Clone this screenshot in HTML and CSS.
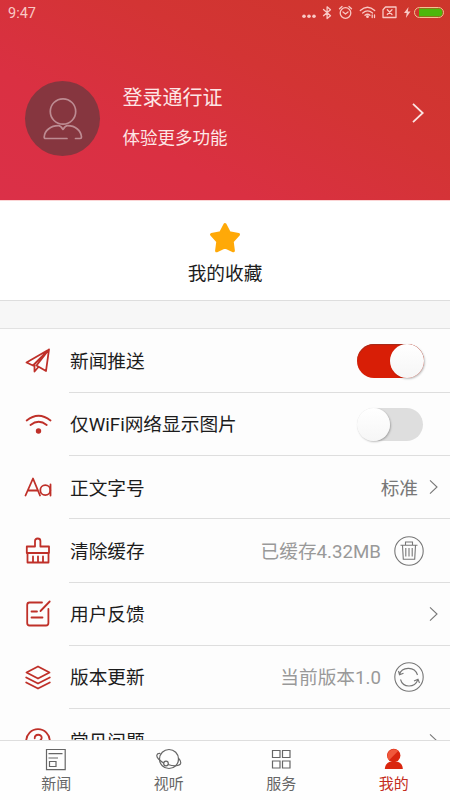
FILE: index.html
```html
<!DOCTYPE html>
<html lang="zh-CN">
<head>
<meta charset="utf-8">
<title>我的</title>
<link rel="stylesheet" href="styles.css">
</head>
<body>
<div class="app">
  <header class="hero">
    <div class="status">
      <span class="time">9:47</span>
      <svg class="status-icons" width="144" height="20" viewBox="301 3 144 20">
        <g fill="#f9c9c5"><circle cx="304" cy="16.3" r="1.8"/><circle cx="309" cy="16.3" r="1.8"/><circle cx="314" cy="16.3" r="1.8"/></g>
        <g fill="none" stroke="#f9c9c5" stroke-width="1.3" stroke-linecap="round" stroke-linejoin="round">
          <path d="M323.5 9.500l7 6.200-3.400 2.800V6.800l3.400 2.900-7 6"/>
          <circle cx="345.500" cy="13" r="5.300"/><path d="M343 12l2.500 2 2.500-2M339.500 8.800l2.500-2.300M351.500 8.800l-2.500-2.300"/>
          <path d="M360.300 10.500q7.200-6.600 14.400 0M362.700 13q4.900-4.200 9.800 0M365 15.300q2.600-2.100 5 0M372.200 15v2.500M374.500 15v2.500"/>
          <path d="M385.500 7h10.500v10.500h-13V9.800zM387.300 9.800l4.700 4.700M392 9.800l-4.700 4.700"/>
        </g>
        <circle cx="367.500" cy="16.700" r="1.400" fill="#f9c9c5"/>
        <path d="M408.500 7l-4.500 6h2.700l-.8 5 4.600-6.400h-2.700z" fill="#f9c9c5"/>
        <rect x="414.500" y="7.500" width="29" height="10" rx="5" fill="none" stroke="#f0c391"/>
        <path d="M419 8.500h20q3.500 0 3.500 4t-3.500 4h-20z" fill="#4db70b"/>
      </svg>
    </div>
    <div class="profile">
      <div class="avatar">
        <svg width="42" height="44" viewBox="0 0 42 44" fill="none" stroke="#bd8b92" stroke-width="1.700" stroke-linecap="round" stroke-linejoin="round">
          <circle cx="21" cy="14.500" r="12.700"/><path d="M25 41.500H3.500q-1.300 0-1.300-1.500C2.500 33.700 8.500 28.700 16.500 28.700q2 0 4.500 3.700 2.500-3.700 4.500-3.700c8 0 13.500 5 14 11.300q0 1.500-1.300 1.500h-4.700"/>
        </svg>
      </div>
      <div class="who"><div class="login">登录通行证</div><div class="sub">体验更多功能</div></div>
      <svg class="go" width="14" height="22" viewBox="0 0 14 22" fill="none" stroke="#fbe4e2" stroke-width="1.800"><path d="M2 1.800L11.700 11 2 20.200"/></svg>
    </div>
  </header>

  <section class="fav">
    <svg width="34" height="34" viewBox="0 0 34 34"><path d="M17 3.500l4.300 8.300 9.200 1.700-6.300 7 1.200 9.300L17 26l-8.400 3.800 1.200-9.300-6.300-7 9.200-1.700z" fill="#ffa908" stroke="#ffa908" stroke-width="3" stroke-linejoin="round"/></svg>
    <span>我的收藏</span>
  </section>

  <main class="list">
    <div class="row">
      <svg class="icon" viewBox="0 0 28 28"><path d="M25 2.500L2.500 15.500l6.500 3zM25 2.500L12.500 18.500l9.500 5.500zM10.500 18V24.500l3.500-4"/></svg>
      <div class="cell"><span class="label">新闻推送</span><span class="switch on"></span></div>
    </div>
    <div class="row">
      <svg class="icon" viewBox="0 0 28 28"><path d="M2.700 9.500q11.800-9.500 23.800 0M6.500 14q8.200-6.500 16.200 0"/><circle class="solid" cx="14.500" cy="20" r="2.700"/></svg>
      <div class="cell"><span class="label">仅WiFi网络显示图片</span><span class="switch"></span></div>
    </div>
    <div class="row">
      <svg class="icon" viewBox="0 0 28 28"><path d="M1.500 21.500L9 4.500l7 17M4 16.500h10M26.500 10.500v11"/><circle cx="21.300" cy="16.200" r="5"/></svg>
      <div class="cell"><span class="label">正文字号</span><span class="value dark">标准</span><svg class="arrow" viewBox="0 0 10 16"><path d="M1 1.300L8 8l-7 6.700"/></svg></div>
    </div>
    <div class="row">
      <svg class="icon" viewBox="0 0 28 28"><path d="M2.800 16V9.500h8.200V4q0-2.500 2.700-2.500T16.400 4v5.500h8.600V16zM3.500 16v9.500h21V16M9 19.500v6M14 19.500v6M19 19.500v6"/></svg>
      <div class="cell"><span class="label">清除缓存</span><span class="value">已缓存4.32MB</span><svg class="action" viewBox="0 0 30 30"><circle cx="15" cy="15" r="14.200"/><path d="M6.500 9.300h17M11.500 9V6h7v3M8.500 9.500l.8 13.800h11.400l.8-13.800M11.800 12v8.500M15 12v8.500M18.200 12v8.500"/></svg></div>
    </div>
    <div class="row">
      <svg class="icon" viewBox="0 0 28 28"><path d="M18 2.500H5.500Q3.200 2.500 3.200 5v18q0 2.500 2.300 2.500H22q2.400 0 2.400-2.500V9M25.700 1.500l-9.200 9.500M7.500 11.500h5.500M7.500 17.500h11"/></svg>
      <div class="cell"><span class="label">用户反馈</span><svg class="arrow" viewBox="0 0 10 16"><path d="M1 1.300L8 8l-7 6.700"/></svg></div>
    </div>
    <div class="row">
      <svg class="icon" viewBox="0 0 28 28"><path d="M14 2.500l11.500 6L14 14.500 2.500 8.500zM2.200 13.500L14 19.500l11.800-6M2.200 18.500L14 24.500l11.800-6"/></svg>
      <div class="cell"><span class="label">版本更新</span><span class="value">当前版本1.0</span><svg class="action" viewBox="0 0 30 30"><circle cx="15" cy="15" r="14.200"/><path d="M5.500 12.500C7.500 5 20.500 3.500 23.500 13M4.500 9l1 3.700 4-1.500M6.500 17.500c2.500 8.500 14 9 17.500 0M20 19l4-1.700 1.500 3.700"/></svg></div>
    </div>
    <div class="row">
      <svg class="icon" viewBox="0 0 28 28"><circle cx="14" cy="14" r="11.800"/><path d="M10.700 11.300c0-4.800 7-4.500 7-.5 0 3-3.500 2.800-3.500 6M14.200 20v.5"/></svg>
      <div class="cell"><span class="label">常见问题</span><svg class="arrow" viewBox="0 0 10 16"><path d="M1 1.300L8 8l-7 6.700"/></svg></div>
    </div>
  </main>

  <nav class="tabs">
    <div class="tab"><svg viewBox="0 0 28 24"><path d="M4.500 1.500h18.700v20.200H4.500zM6.500 5.700h14M6.500 10h9.500M7.500 13.500h6.500v5H7.500z"/></svg><span>新闻</span></div>
    <div class="tab"><svg viewBox="0 0 28 24"><circle cx="14" cy="11" r="9.500"/><path d="M5.500 5.500C1 5 1 8.500 3.500 11q2.500 2.500 5.500 4.200M13 16.500c6 2 11.500 1.500 12.500-.7.700-1.700-.5-4-2.200-5.800"/><circle cx="11" cy="15.500" r="2.300"/></svg><span>视听</span></div>
    <div class="tab"><svg viewBox="0 0 28 24"><path d="M5.500 2.500h7.500v7H5.500zM15.500 2.500H23v7h-7.500zM5.500 13h7.500v7H5.500zM15.500 13H23v7h-7.500z"/></svg><span>服务</span></div>
    <div class="tab active"><svg viewBox="0 0 28 24"><circle cx="13.700" cy="7.500" r="6.700"/><path d="M4.800 21q.3-5.500 5-7.300h8q5 2 5 7.300z"/><path class="shade" d="M9 12.300a6.700 6.700 0 0 1 9.400-9.500z"/></svg><span>我的</span></div>
  </nav>
</div>
</body>
</html>
```
FILE: styles.css
```css
* { box-sizing: border-box; }
body {
  margin: 0;
  font-family: Roboto, "Noto Sans CJK SC", sans-serif;
  color: #1c1c1c;
}
.app {
  width: 450px;
  height: 800px;
  display: flex;
  flex-direction: column;
  overflow: hidden;
  background: #fdfdfd;
}
.hero {
  flex: none;
  height: 200px;
  background: linear-gradient(27deg, #db3048 0%, #da3042 30%, #d33434 62%, #cd362b 100%);
}
.status {
  height: 26px;
  padding: 3px 5px 0 8px;
  display: flex;
  justify-content: space-between;
}
.time {
  font-size: 14.500px;
  line-height: 21px;
  color: #f9c9c5;
}
.profile {
  display: flex;
  align-items: center;
  height: 185px;
  padding: 0 25px;
}
.avatar {
  width: 75px;
  height: 75px;
  border-radius: 50%;
  background: #86363f;
  display: flex;
  align-items: center;
  justify-content: center;
}
.who {
  margin-left: 22.500px;
  padding-bottom: 1px;
  color: #fde6e6;
  white-space: nowrap;
}
.login { font-size: 20px; line-height: 40px; }
.sub { font-size: 17.500px; line-height: 40px; }
.go { margin: -11px 0 0 auto; }
.fav {
  flex: none;
  height: 101px;
  padding-top: 20px;
  display: flex;
  flex-direction: column;
  align-items: center;
  background: #fff;
  border-top: 1px solid #fbd5d5;
  border-bottom: 1px solid #dedede;
  font-size: 18.700px;
  line-height: 38px;
}
.fav svg { flex: none; }
.list {
  flex: 1;
  min-height: 0;
  overflow: hidden;
  padding-top: 1.600px;
  border-top: 27px solid #f7f7f7;
  box-shadow: inset 0 1px #e2e2e2;
}
.row {
  height: 63.300px;
  display: flex;
  align-items: center;
  padding-left: 24px;
}
.icon {
  width: 28px;
  height: 28px;
  fill: none;
  stroke: #bf3029;
  stroke-width: 1.800;
  stroke-linejoin: round;
  stroke-linecap: round;
}
.icon .solid { fill: #bf3029; stroke: none; }
.cell {
  flex: 1;
  height: 100%;
  margin-left: 17px;
  padding: 0 11px 0 1px;
  border-bottom: 1px solid #dedede;
  display: flex;
  align-items: center;
}
.label, .value {
  padding-bottom: 2.500px;
  font-size: 18.700px;
}
.label { margin-right: auto; }
.value { color: #999; }
.value.dark { color: #777; }
.arrow, .action {
  fill: none;
  stroke: #777;
  stroke-width: 1.100;
}
.arrow { width: 10px; height: 16px; margin-left: 11px; }
.action { width: 30px; height: 30px; margin: 0 15px 0 13px; }
.switch {
  width: 66px;
  height: 33px;
  margin-right: 16px;
  border-radius: 17px;
  background: #dedede;
  display: flex;
}
.switch::before {
  content: "";
  width: 33px;
  height: 33px;
  border-radius: 50%;
  background: linear-gradient(#fff, #f6f6f6);
  box-shadow: 1px 1px 2px rgba(0, 0, 0, .25);
}
.switch.on {
  width: 67px;
  height: 34px;
  margin-right: 15px;
  justify-content: flex-end;
  background: #d81e06;
  box-shadow: inset 0 1px 1px #a32c1c;
}
.switch.on::before { width: 34px; height: 34px; }
.tabs {
  flex: none;
  height: 60px;
  display: flex;
  background: #fefefe;
  border-top: 1px solid #dedede;
}
.tab {
  flex: 1;
  padding-top: 7px;
  display: flex;
  flex-direction: column;
  align-items: center;
  font-size: 15px;
  line-height: 25px;
  color: #666;
}
.tab svg {
  width: 28px;
  height: 24px;
  fill: none;
  stroke: #666;
  stroke-width: 1.200;
}
.tab.active { color: #c42c20; }
.tab.active svg { fill: #d9260f; stroke: none; }
.tab .shade { fill: #f0583b; }
```
